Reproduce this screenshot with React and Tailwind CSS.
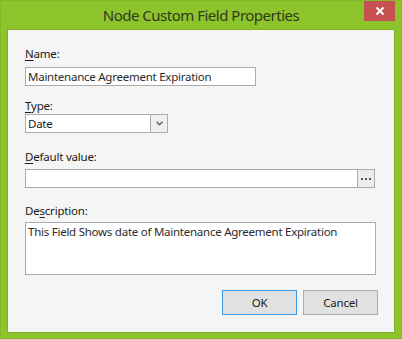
import React from "react";

const font = { fontFamily: '"Noto Sans", "Open Sans", sans-serif' };

const Label = ({ pre, u, post, className = "" }) => (
  <div className={`h-4 leading-4 text-[11.5px] tracking-[-0.2px] text-[#1a1a1a] ${className}`}>
    {pre}
    <span className="underline underline-offset-2">{u}</span>
    {post}
  </div>
);

export default function App() {
  return (
    <div
      className="w-[402px] h-[339px] bg-[#8dc42c] border border-[#84b92a] flex flex-col px-[6px] pb-[5px]"
      style={font}
    >
      {/* Title bar */}
      <div className="relative h-[28px] flex items-center justify-center shrink-0">
        <span className="text-[15px] text-[#2f3a1e] tracking-[-0.5px] pt-[1px]">
          Node Custom Field Properties
        </span>
        <button className="absolute top-0 right-0 w-[31px] h-[20px] bg-[#c75050] flex items-center justify-center">
          <svg width="10" height="10" viewBox="0 0 10 10">
            <path d="M1.5 1.5 L8.5 8.5 M8.5 1.5 L1.5 8.5" stroke="#fff" strokeWidth="2" />
          </svg>
        </button>
      </div>

      {/* Client area */}
      <div className="flex-1 bg-[#f5f5f5] border border-[#7fb126] pl-[17px] pr-[17px] pt-[16px] flex flex-col text-[11.5px] tracking-[-0.25px]">
        <Label u="N" post="ame:" />
        <div className="mt-[5px] w-[231px] h-[19px] bg-white border border-[#ababab] px-[2px] leading-[17px] text-[#2b2b2b]">
          Maintenance Agreement Expiration
        </div>

        <Label u="T" post="ype:" className="mt-[12px]" />
        <div className="w-[143px] h-[19px] bg-white border border-[#ababab] flex">
          <div className="flex-1 px-[2px] leading-[17px] text-[#1a1a1a]">Date</div>
          <div className="w-[17px] bg-[#efefef] border-l border-[#ababab] flex items-center justify-center">
            <svg width="7" height="5" viewBox="0 0 7 5">
              <path d="M0.5 0.8 L3.5 3.8 L6.5 0.8" fill="none" stroke="#606060" strokeWidth="1.4" />
            </svg>
          </div>
        </div>

        <Label u="D" post="efault value:" className="mt-[16px]" />
        <div className="mt-[4px] w-[350px] h-[19px] bg-white border border-[#ababab] flex">
          <div className="flex-1" />
          <div className="w-[17px] bg-[#ececec] border-l border-[#ababab] flex items-center justify-center gap-[2px]">
            <span className="w-[2px] h-[2px] bg-[#555]" />
            <span className="w-[2px] h-[2px] bg-[#555]" />
            <span className="w-[2px] h-[2px] bg-[#555]" />
          </div>
        </div>

        <Label pre="De" u="s" post="cription:" className="mt-[15px]" />
        <div className="mt-[3px] w-[351px] h-[53px] bg-white border border-[#ababab] px-[2px] pt-[1px] leading-[16px] text-[#2b2b2b]">
          This Field Shows date of Maintenance Agreement Expiration
        </div>

        <div className="mt-[15px] flex justify-end gap-[6px] mr-[-1px]">
          <button className="w-[75px] h-[25px] bg-[#e1e1e1] border border-[#3c9be6] text-[#1a1a1a] text-[11.5px]">
            OK
          </button>
          <button className="w-[75px] h-[25px] bg-[#e1e1e1] border border-[#adadad] text-[#1a1a1a] text-[11.5px]">
            Cancel
          </button>
        </div>
      </div>
    </div>
  );
}
